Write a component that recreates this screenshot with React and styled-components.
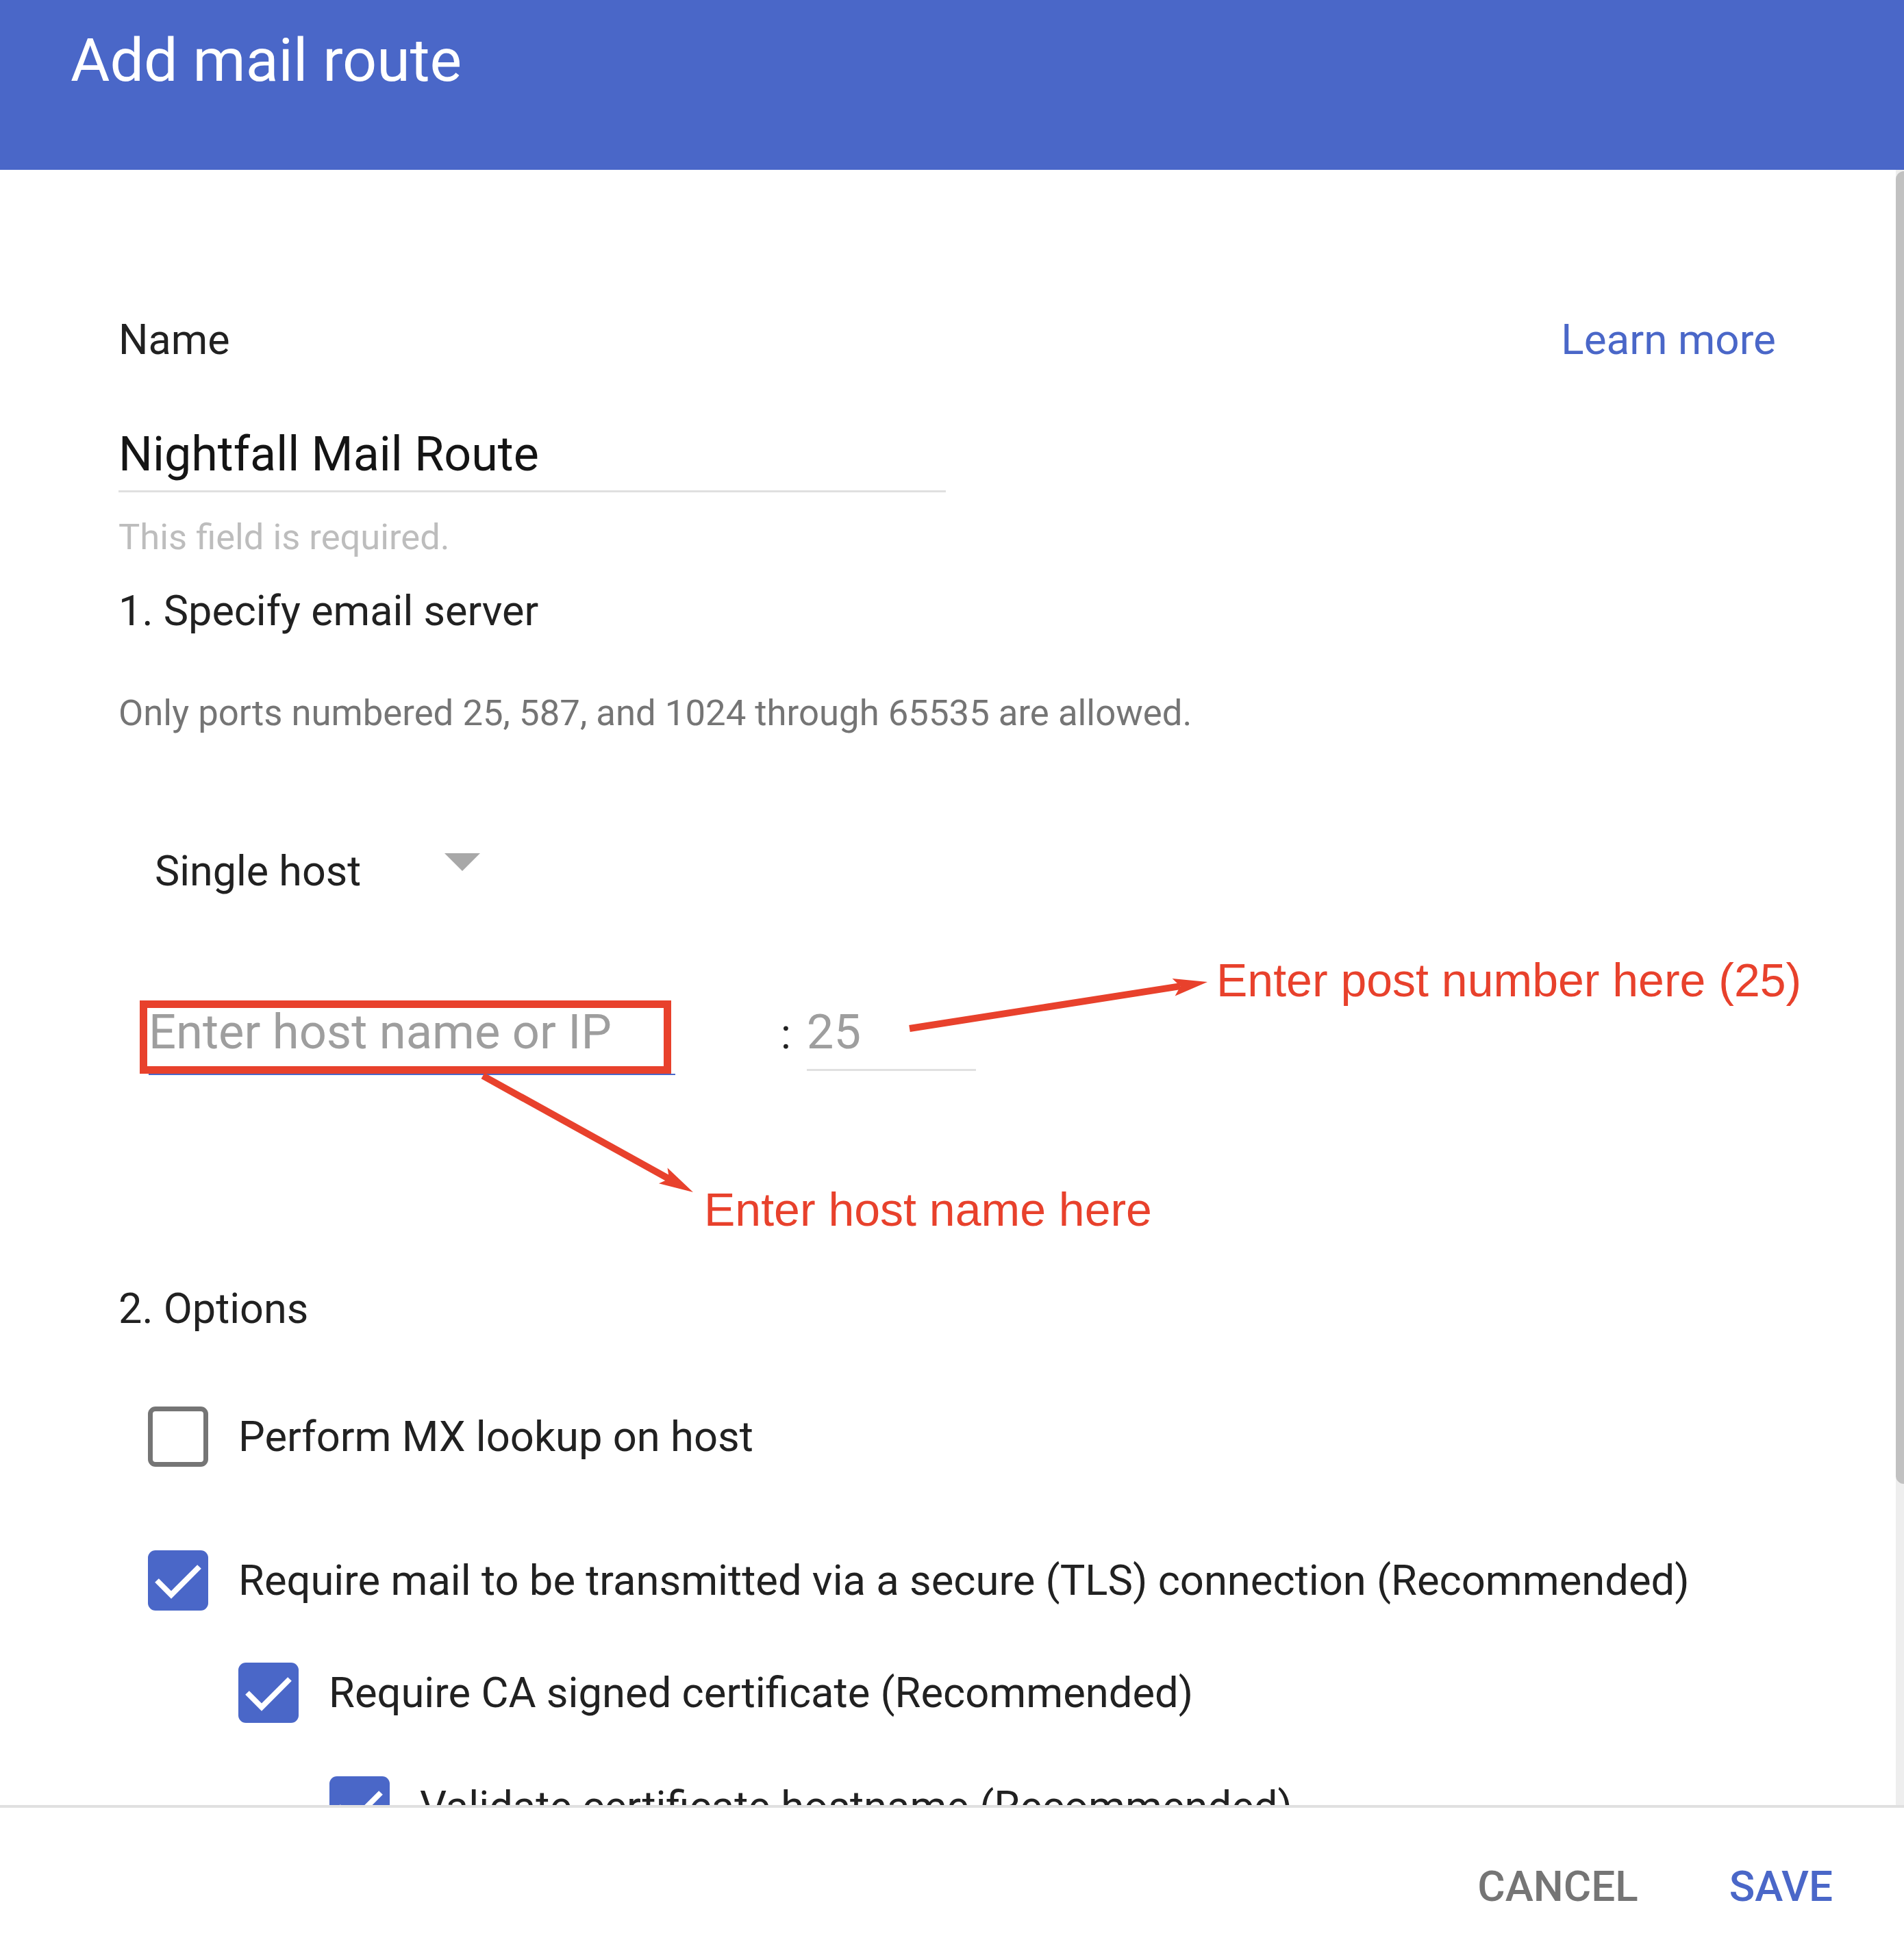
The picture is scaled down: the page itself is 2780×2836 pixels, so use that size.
import React from "react";
import styled, { createGlobalStyle } from "styled-components";

const BLUE = "#4a67c8";
const RED = "#e8412c";
const TEXT = "#212121";

const GlobalStyle = createGlobalStyle`
  html, body {
    margin: 0;
    padding: 0;
    background: #fff;
  }
  body {
    font-family: Roboto, "Liberation Sans", Arial, sans-serif;
    color: ${TEXT};
  }
  * {
    box-sizing: border-box;
  }
`;

const Page = styled.div`
  position: relative;
  width: 2780px;
  height: 2836px;
  display: flex;
  flex-direction: column;
  overflow: hidden;
  background: #fff;
`;

const Header = styled.header`
  height: 248px;
  flex-shrink: 0;
  background: ${BLUE};
  padding: 44px 0 0 103px;
`;

const Title = styled.h1`
  margin: 0;
  font-size: 88px;
  line-height: 88px;
  font-weight: 400;
  color: #fff;
`;

const Body = styled.div`
  flex: 1;
  min-height: 0;
  display: flex;
`;

const Content = styled.div`
  flex: 1;
  overflow: hidden;
  padding: 218px 175px 0 173px;
`;

const ScrollTrack = styled.div`
  width: 12px;
  flex-shrink: 0;
  background: #eeeeee;
  padding-top: 2px;
`;

const ScrollThumb = styled.div`
  height: 1917px;
  background: #c1c1c1;
  border-radius: 12px 0 0 12px;
`;

const NameRow = styled.div`
  display: flex;
  justify-content: space-between;
  align-items: baseline;
  font-size: 61px;
  line-height: 60px;
`;

const FieldLabel = styled.span`
  color: ${TEXT};
`;

const LearnMore = styled.a`
  font-size: 62px;
  color: ${BLUE};
  text-decoration: none;
`;

const NameField = styled.div`
  width: 1208px;
  margin-top: 102px;
  padding-bottom: 18px;
  border-bottom: 3px solid #e0e0e0;
  font-size: 70px;
  line-height: 70px;
  color: #141414;
`;

const Helper = styled.div`
  margin-top: 39px;
  font-size: 52.5px;
  line-height: 52px;
  color: #bdbdbd;
`;

const SectionTitle = styled.div`
  margin-top: ${({ $mt }) => $mt}px;
  font-size: 61.2px;
  line-height: 60px;
  color: ${TEXT};
`;

const Hint = styled.div`
  margin-top: 93px;
  font-size: 52.7px;
  line-height: 52px;
  color: #757575;
`;

const SelectRow = styled.div`
  display: flex;
  align-items: flex-start;
  margin: 175px 0 0 53px;
  font-size: 61px;
  line-height: 60px;
  color: ${TEXT};
`;

const SelectArrow = styled.span`
  width: 0;
  height: 0;
  margin: 4px 0 0 122px;
  border-left: 26px solid transparent;
  border-right: 26px solid transparent;
  border-top: 26px solid #a8a8a8;
`;

const HostRow = styled.div`
  display: flex;
  align-items: baseline;
  margin-top: 170px;
`;

const LineField = styled.div`
  width: ${({ $w }) => $w}px;
  margin-left: ${({ $ml }) => $ml}px;
  padding-bottom: ${({ $pb }) => $pb}px;
  border-bottom: ${({ $focused }) =>
    $focused ? `2px solid ${BLUE}` : "3px solid #e0e0e0"};
  font-size: 70.5px;
  line-height: 70px;
  color: #9e9e9e;
`;

const Colon = styled.span`
  margin-left: 154px;
  font-size: 61px;
  line-height: 60px;
  color: ${TEXT};
`;

const OptionRow = styled.label`
  display: flex;
  align-items: center;
  margin-top: ${({ $mt }) => $mt}px;
  padding-left: ${({ $indent }) => $indent}px;
  font-size: 61.5px;
  line-height: 60px;
  color: ${TEXT};
  white-space: nowrap;
`;

const Box = styled.span`
  width: 88px;
  height: 88px;
  flex-shrink: 0;
  border-radius: 11px;
  background: ${({ $checked }) => ($checked ? BLUE : "#fff")};
  border: ${({ $checked }) => ($checked ? "none" : "7px solid #757575")};
  display: flex;
  align-items: center;
  justify-content: center;
`;

const OptionText = styled.span`
  margin-left: 44px;
`;

const Footer = styled.footer`
  height: 200px;
  flex-shrink: 0;
  border-top: 4px solid #e0e0e0;
  display: flex;
  justify-content: flex-end;
  align-items: flex-start;
  gap: 133px;
  padding: 84px 104px 0 0;
`;

const TextButton = styled.button`
  border: none;
  background: none;
  padding: 0;
  font-family: Roboto, "Liberation Sans", Arial, sans-serif;
  font-size: 62px;
  line-height: 62px;
  font-weight: 500;
  color: ${({ $primary }) => ($primary ? BLUE : "#757575")};
`;

const Overlay = styled.svg`
  position: absolute;
  left: 0;
  top: 0;
  pointer-events: none;
`;

const Callout = styled.div`
  position: absolute;
  left: ${({ $x }) => $x}px;
  top: ${({ $y }) => $y}px;
  font-family: "Liberation Sans", Arial, sans-serif;
  font-size: 68px;
  line-height: 68px;
  color: ${RED};
  white-space: nowrap;
`;

function Checkbox({ checked }) {
  return (
    <Box $checked={checked}>
      {checked && (
        <svg width="88" height="88" viewBox="0 0 88 88">
          <polyline
            points="13,44 34,65 75,24"
            fill="none"
            stroke="#fff"
            strokeWidth="8"
          />
        </svg>
      )}
    </Box>
  );
}

function Arrow({ from, to }) {
  const dx = to[0] - from[0];
  const dy = to[1] - from[1];
  const len = Math.hypot(dx, dy);
  const ux = dx / len;
  const uy = dy / len;
  const nx = -uy;
  const ny = ux;
  const head = 50;
  const half = 13;
  const notch = 40;
  const bx = to[0] - ux * head;
  const by = to[1] - uy * head;
  const kx = to[0] - ux * notch;
  const ky = to[1] - uy * notch;
  const pts = [
    [to[0], to[1]],
    [bx + nx * half, by + ny * half],
    [kx, ky],
    [bx - nx * half, by - ny * half],
  ];
  return (
    <g>
      <line x1={from[0]} y1={from[1]} x2={kx} y2={ky} stroke={RED} strokeWidth="10" />
      <polygon points={pts.map((p) => p.join(",")).join(" ")} fill={RED} />
    </g>
  );
}

const options = [
  { text: "Perform MX lookup on host", checked: false, indent: 43, mt: 113 },
  {
    text: "Require mail to be transmitted via a secure (TLS) connection (Recommended)",
    checked: true,
    indent: 43,
    mt: 122,
  },
  { text: "Require CA signed certificate (Recommended)", checked: true, indent: 175, mt: 76 },
  { text: "Validate certificate hostname (Recommended)", checked: true, indent: 308, mt: 78 },
];

export default function App() {
  return (
    <Page>
      <GlobalStyle />
      <Header>
        <Title>Add mail route</Title>
      </Header>

      <Body>
        <Content>
          <NameRow>
            <FieldLabel>Name</FieldLabel>
            <LearnMore href="#">Learn more</LearnMore>
          </NameRow>
          <NameField>Nightfall Mail Route</NameField>
          <Helper>This field is required.</Helper>

          <SectionTitle $mt={52}>1. Specify email server</SectionTitle>
          <Hint>Only ports numbered 25, 587, and 1024 through 65535 are allowed.</Hint>

          <SelectRow>
            <span>Single host</span>
            <SelectArrow />
          </SelectRow>

          <HostRow>
            <LineField $w={769} $ml={44} $pb={26} $focused>
              Enter host name or IP
            </LineField>
            <Colon>:</Colon>
            <LineField $w={247} $ml={23} $pb={19}>
              25
            </LineField>
          </HostRow>

          <SectionTitle $mt={311}>2. Options</SectionTitle>

          {options.map((o) => (
            <OptionRow key={o.text} $mt={o.mt} $indent={o.indent}>
              <Checkbox checked={o.checked} />
              <OptionText>{o.text}</OptionText>
            </OptionRow>
          ))}
        </Content>
        <ScrollTrack>
          <ScrollThumb />
        </ScrollTrack>
      </Body>

      <Footer>
        <TextButton>CANCEL</TextButton>
        <TextButton $primary>SAVE</TextButton>
      </Footer>

      <Overlay width="2780" height="2836" viewBox="0 0 2780 2836">
        <rect x="209.5" y="1466.5" width="765" height="96" fill="none" stroke={RED} strokeWidth="11" />
        <Arrow from={[1328, 1502]} to={[1763, 1434]} />
        <Arrow from={[705, 1571]} to={[1012, 1741]} />
      </Overlay>
      <Callout $x={1776} $y={1397}>Enter post number here (25)</Callout>
      <Callout $x={1028} $y={1732}>Enter host name here</Callout>
    </Page>
  );
}
